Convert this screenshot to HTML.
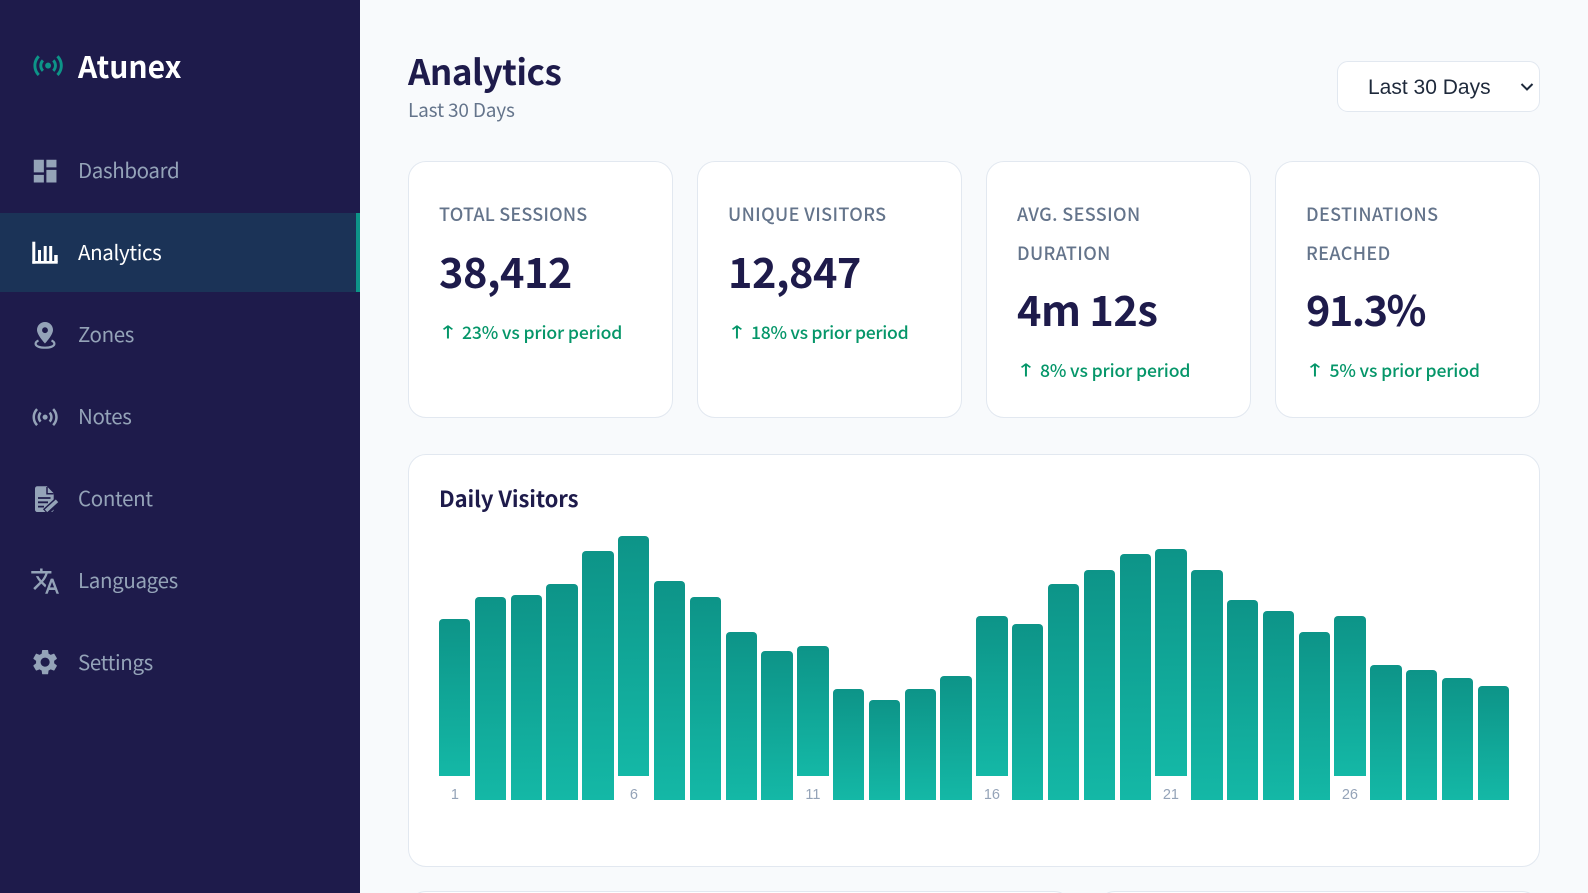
<!DOCTYPE html>
<html lang="en"><head><meta charset="utf-8"><title>Atunex Analytics</title>
<style>
*{box-sizing:border-box;margin:0;padding:0}
html,body{width:1588px;height:893px;overflow:hidden;background:#f8fafc}
body{position:relative;font-family:"Noto Sans CJK SC","Liberation Sans",sans-serif;color:#1e1b4b}
#wrap{position:absolute;left:0;top:0;width:1588px;height:893px;overflow:hidden}
.t{position:absolute;white-space:nowrap;line-height:30px;height:30px}
#side{position:absolute;left:0;top:0;width:360px;height:893px;background:#1e1b4b}
#act{position:absolute;left:0;top:213px;width:360px;height:79px;background:rgba(13,148,136,.2);border-right:4px solid #0d9488}
.nav{left:78px;font-size:20.5px;letter-spacing:-.34px;color:#94a3b8}
.card{position:absolute;background:#fff;border:1px solid #e2e8f0;border-radius:18px}
.lb{font-size:18px;color:#64748b;font-weight:500;letter-spacing:.37px}
.val{font-size:41.5px;font-weight:700;line-height:50px;height:50px;letter-spacing:-.5px}
.chg{font-size:17.6px;color:#059669;font-weight:500;letter-spacing:-.15px}
.arr{font:17px/30px "DejaVu Sans",sans-serif;color:#059669;transform:scale(1.4,1.05)}
.b{position:absolute;width:31.8px;border-radius:4px 4px 0 0;background:linear-gradient(to top,#14b8a6,#0d9488)}
.n{position:absolute;width:31.8px;text-align:center;font:14.5px/20px "Liberation Sans",sans-serif;color:#94a3b8;top:785px}
</style></head><body><div id="wrap">
<div id="side"></div><div id="act"></div>
<svg style="position:absolute;left:0;top:0" width="360" height="893" viewBox="0 0 360 893">
<g transform="translate(30.5,48) scale(1.467)" fill="#0d9488"><path d="M7.76 16.24C6.67 15.16 6 13.66 6 12s.67-3.16 1.76-4.24l1.42 1.42C8.45 9.9 8 10.9 8 12c0 1.1.45 2.1 1.17 2.83l-1.41 1.41zm8.48 0C17.33 15.16 18 13.66 18 12s-.67-3.16-1.76-4.24l-1.42 1.42C15.55 9.9 16 10.9 16 12c0 1.1-.45 2.1-1.17 2.83l1.41 1.41zM12 10c-1.1 0-2 .9-2 2s.9 2 2 2 2-.9 2-2-.9-2-2-2zm8 2c0 2.21-.9 4.21-2.35 5.65l1.42 1.42C20.88 17.26 22 14.76 22 12s-1.12-5.26-2.93-7.07l-1.42 1.42C19.1 7.79 20 9.79 20 12zM6.35 6.35L4.93 4.93C3.12 6.74 2 9.24 2 12s1.12 5.26 2.93 7.07l1.42-1.42C4.9 16.21 4 14.21 4 12s.9-4.21 2.35-5.65z"/></g>
<g transform="translate(30,156) scale(1.26)" fill="#94a3b8"><path d="M3 13h8V3H3v10zm0 8h8v-6H3v6zm10 0h8V11h-8v10zm0-18v6h8V3h-8z"/></g>
<g fill="#fff"><rect x="32.3" y="241.7" width="3" height="22"/><rect x="32.3" y="261" width="25.4" height="2.7"/><rect x="38" y="250" width="3" height="12"/><rect x="43.7" y="246" width="3" height="16"/><rect x="49.2" y="246" width="3" height="16"/><rect x="54.2" y="255" width="3.500" height="7"/></g>
<g fill="#94a3b8"><path fill-rule="evenodd" d="M45 322c-4.6 0-8 3.5-8 8 0 5 8 13.5 8 13.5s8-8.500 8-13.500c0-4.500-3.400-8-8-8zm0 5.300a2.900 2.900 0 1 1 0 5.800 2.900 2.900 0 0 1 0-5.800z"/><path d="M38.500 340.500c-2 .9-2.900 2-2.900 3.300 0 2.500 4.200 3.900 9.400 3.900s9.400-1.400 9.400-3.900c0-1.300-.9-2.400-2.900-3.300" fill="none" stroke="#94a3b8" stroke-width="2.200"/></g>
<g transform="translate(30,402) scale(1.26)" fill="#94a3b8"><path d="M7.76 16.24C6.67 15.16 6 13.66 6 12s.67-3.16 1.76-4.24l1.42 1.42C8.45 9.9 8 10.9 8 12c0 1.1.45 2.1 1.17 2.83l-1.41 1.41zm8.48 0C17.33 15.16 18 13.66 18 12s-.67-3.16-1.76-4.24l-1.42 1.42C15.55 9.9 16 10.9 16 12c0 1.1-.45 2.1-1.17 2.83l1.41 1.41zM12 10c-1.1 0-2 .9-2 2s.9 2 2 2 2-.9 2-2-.9-2-2-2zm8 2c0 2.21-.9 4.21-2.35 5.65l1.42 1.42C20.88 17.26 22 14.76 22 12s-1.12-5.26-2.93-7.07l-1.42 1.42C19.1 7.79 20 9.79 20 12zM6.35 6.35L4.93 4.93C3.12 6.74 2 9.24 2 12s1.12 5.26 2.93 7.07l1.42-1.42C4.9 16.21 4 14.21 4 12s.9-4.21 2.35-5.65z"/></g>
<path d="M37 486.300H46.800L53.700 493.200V509.500C53.700 510.800 52.700 512 51.500 512H37C35.800 512 35 510.800 35 509.500V488.800C35 487.400 35.800 486.300 37 486.300Z" fill="#94a3b8"/>
<path d="M47 487V493.700H53.700" fill="none" stroke="#1e1b4b" stroke-width="1.500"/>
<path d="M38 498H50.500M38 502.300H48M38 506.600H44" stroke="#1e1b4b" stroke-width="1.800"/>
<path d="M45.500 512L57.500 501" stroke="#1e1b4b" stroke-width="7.500"/>
<path d="M46 510.800L57 500.800" stroke="#94a3b8" stroke-width="3.600"/>
<g transform="translate(30,566) scale(1.26)" fill="#94a3b8"><path d="M12.87 15.07l-2.54-2.51.03-.03c1.74-1.94 2.98-4.17 3.71-6.53H17V4h-7V2H8v2H1v1.99h11.17C11.5 7.92 10.44 9.75 9 11.35 8.07 10.32 7.3 9.19 6.69 8h-2c.73 1.63 1.73 3.17 2.98 4.56l-5.09 5.02L4 19l5-5 3.11 3.11.76-2.04zM18.5 10h-2L12 22h2l1.12-3h4.75L21 22h2l-4.5-12zm-2.62 7l1.62-4.33L19.12 17h-3.24z"/></g>
<g transform="translate(30,647) scale(1.26)" fill="#94a3b8"><path d="M19.14 12.94c.04-.3.06-.61.06-.94 0-.32-.02-.64-.07-.94l2.03-1.58c.18-.14.23-.41.12-.61l-1.92-3.32c-.12-.22-.37-.29-.59-.22l-2.39.96c-.5-.38-1.03-.7-1.62-.94l-.36-2.54c-.04-.24-.24-.41-.48-.41h-3.84c-.24 0-.43.17-.47.41l-.36 2.54c-.59.24-1.13.57-1.62.94l-2.39-.96c-.22-.08-.47 0-.59.22L2.74 8.87c-.12.21-.08.47.12.61l2.03 1.58c-.05.3-.09.63-.09.94s.02.64.07.94l-2.03 1.58c-.18.14-.23.41-.12.61l1.92 3.32c.12.22.37.29.59.22l2.39-.96c.5.38 1.03.7 1.62.94l.36 2.54c.05.24.24.41.48.41h3.84c.24 0 .44-.17.47-.41l.36-2.54c.59-.24 1.13-.56 1.62-.94l2.39.96c.22.08.47 0 .59-.22l1.92-3.32c.12-.22.07-.47-.12-.61l-2.01-1.58zM12 15.6c-1.98 0-3.6-1.62-3.6-3.6s1.62-3.6 3.6-3.6 3.6 1.62 3.6 3.6-1.62 3.6-3.6 3.6z"/></g>
</svg>
<div class="t" style="left:78px;top:50px;font-size:30px;font-weight:700;color:#fff">Atunex</div>
<div class="t nav" style="top:154px">Dashboard</div>
<div class="t nav" style="top:236px;color:#fff">Analytics</div>
<div class="t nav" style="top:318px">Zones</div>
<div class="t nav" style="top:400px">Notes</div>
<div class="t nav" style="top:482px">Content</div>
<div class="t nav" style="top:564px">Languages</div>
<div class="t nav" style="top:646px">Settings</div>

<div class="t" style="left:408px;top:46px;height:50px;line-height:50px;font-size:35px;font-weight:700;letter-spacing:-.5px">Analytics</div>
<div class="t" style="left:408px;top:95px;font-size:19px;letter-spacing:-.18px;color:#64748b">Last 30 Days</div>
<div style="position:absolute;left:1337px;top:61px;width:203px;height:51px;background:#fff;border:1px solid #e2e8f0;border-radius:11px"></div>
<div class="t" style="left:1368px;top:73px;font:21px/30px 'Liberation Sans',sans-serif;color:#1e293b">Last 30 Days</div>
<svg style="position:absolute;left:1519px;top:81px" width="16" height="12" viewBox="0 0 16 12"><path d="M2.500 3L8 8.500 13.500 3" fill="none" stroke="#1e293b" stroke-width="2"/></svg>

<div class="card" style="left:408px;top:161px;width:265px;height:257px"></div>
<div class="card" style="left:697px;top:161px;width:265px;height:257px"></div>
<div class="card" style="left:986px;top:161px;width:265px;height:257px"></div>
<div class="card" style="left:1275px;top:161px;width:265px;height:257px"></div>

<div class="t lb" style="left:439px;top:199px;letter-spacing:.2px">TOTAL SESSIONS</div>
<div class="t val" style="left:439px;top:245px">38,412</div>
<div class="t arr" style="left:441px;top:318px">↑</div>
<div class="t chg" style="left:462px;top:318px">23% vs prior period</div>

<div class="t lb" style="left:728px;top:199px">UNIQUE VISITORS</div>
<div class="t val" style="left:728px;top:245px">12,847</div>
<div class="t arr" style="left:730px;top:318px">↑</div>
<div class="t chg" style="left:751px;top:318px;letter-spacing:-.3px">18% vs prior period</div>

<div class="t lb" style="left:1017px;top:199px">AVG. SESSION</div>
<div class="t lb" style="left:1017px;top:238px">DURATION</div>
<div class="t val" style="left:1017px;top:283px">4m 12s</div>
<div class="t arr" style="left:1019px;top:356px">↑</div>
<div class="t chg" style="left:1040px;top:356px">8% vs prior period</div>

<div class="t lb" style="left:1306px;top:199px">DESTINATIONS</div>
<div class="t lb" style="left:1306px;top:238px">REACHED</div>
<div class="t val" style="left:1306px;top:283px;letter-spacing:-1.6px">91.3%</div>
<div class="t arr" style="left:1308px;top:356px">↑</div>
<div class="t chg" style="left:1329.5px;top:356px">5% vs prior period</div>

<div class="card" style="left:408px;top:454px;width:1132px;height:413px"></div>
<div class="t" style="left:439px;top:483px;font-size:22px;font-weight:700;letter-spacing:-.1px">Daily Visitors</div>

<div class="b" style="left:439px;width:31.4px;top:619px;height:157px"></div>
<div class="b" style="left:474.8px;width:31.6px;top:597px;height:203px"></div>
<div class="b" style="left:510.6px;top:595px;height:205px"></div>
<div class="b" style="left:546.4px;top:584px;height:216px"></div>
<div class="b" style="left:582.2px;top:551px;height:249px"></div>
<div class="b" style="left:618px;width:31.4px;top:536px;height:240px"></div>
<div class="b" style="left:653.8px;width:31.5px;top:581px;height:219px"></div>
<div class="b" style="left:689.6px;top:597px;height:203px"></div>
<div class="b" style="left:725.5px;width:31.5px;top:632px;height:168px"></div>
<div class="b" style="left:761.2px;top:651px;height:149px"></div>
<div class="b" style="left:797px;top:646px;height:130px"></div>
<div class="b" style="left:832.8px;width:31.5px;top:689px;height:111px"></div>
<div class="b" style="left:868.6px;top:700px;height:100px"></div>
<div class="b" style="left:904.5px;width:31.7px;top:689px;height:111px"></div>
<div class="b" style="left:940.2px;top:676px;height:124px"></div>
<div class="b" style="left:976px;top:616px;height:160px"></div>
<div class="b" style="left:1011.8px;width:31.4px;top:624px;height:176px"></div>
<div class="b" style="left:1047.6px;top:584px;height:216px"></div>
<div class="b" style="left:1083.5px;width:31.7px;top:570px;height:230px"></div>
<div class="b" style="left:1119.5px;width:31.5px;top:554px;height:246px"></div>
<div class="b" style="left:1155px;top:549px;height:227px"></div>
<div class="b" style="left:1190.8px;top:570px;height:230px"></div>
<div class="b" style="left:1226.6px;top:600px;height:200px"></div>
<div class="b" style="left:1262.5px;width:31.7px;top:611px;height:189px"></div>
<div class="b" style="left:1298.5px;width:31.5px;top:632px;height:168px"></div>
<div class="b" style="left:1334px;top:616px;height:160px"></div>
<div class="b" style="left:1369.8px;top:665px;height:135px"></div>
<div class="b" style="left:1405.6px;top:670px;height:130px"></div>
<div class="b" style="left:1441.5px;width:31.7px;top:678px;height:122px"></div>
<div class="b" style="left:1477.5px;width:31.5px;top:686px;height:114px"></div>
<div class="n" style="left:439px">1</div>
<div class="n" style="left:618px">6</div>
<div class="n" style="left:797px">11</div>
<div class="n" style="left:976px">16</div>
<div class="n" style="left:1155px">21</div>
<div class="n" style="left:1334px">26</div>

<div class="card" style="left:408px;top:891px;width:664.2px;height:100px"></div>
<div class="card" style="left:1097.2px;top:891px;width:442.8px;height:100px"></div>
</div></body></html>
